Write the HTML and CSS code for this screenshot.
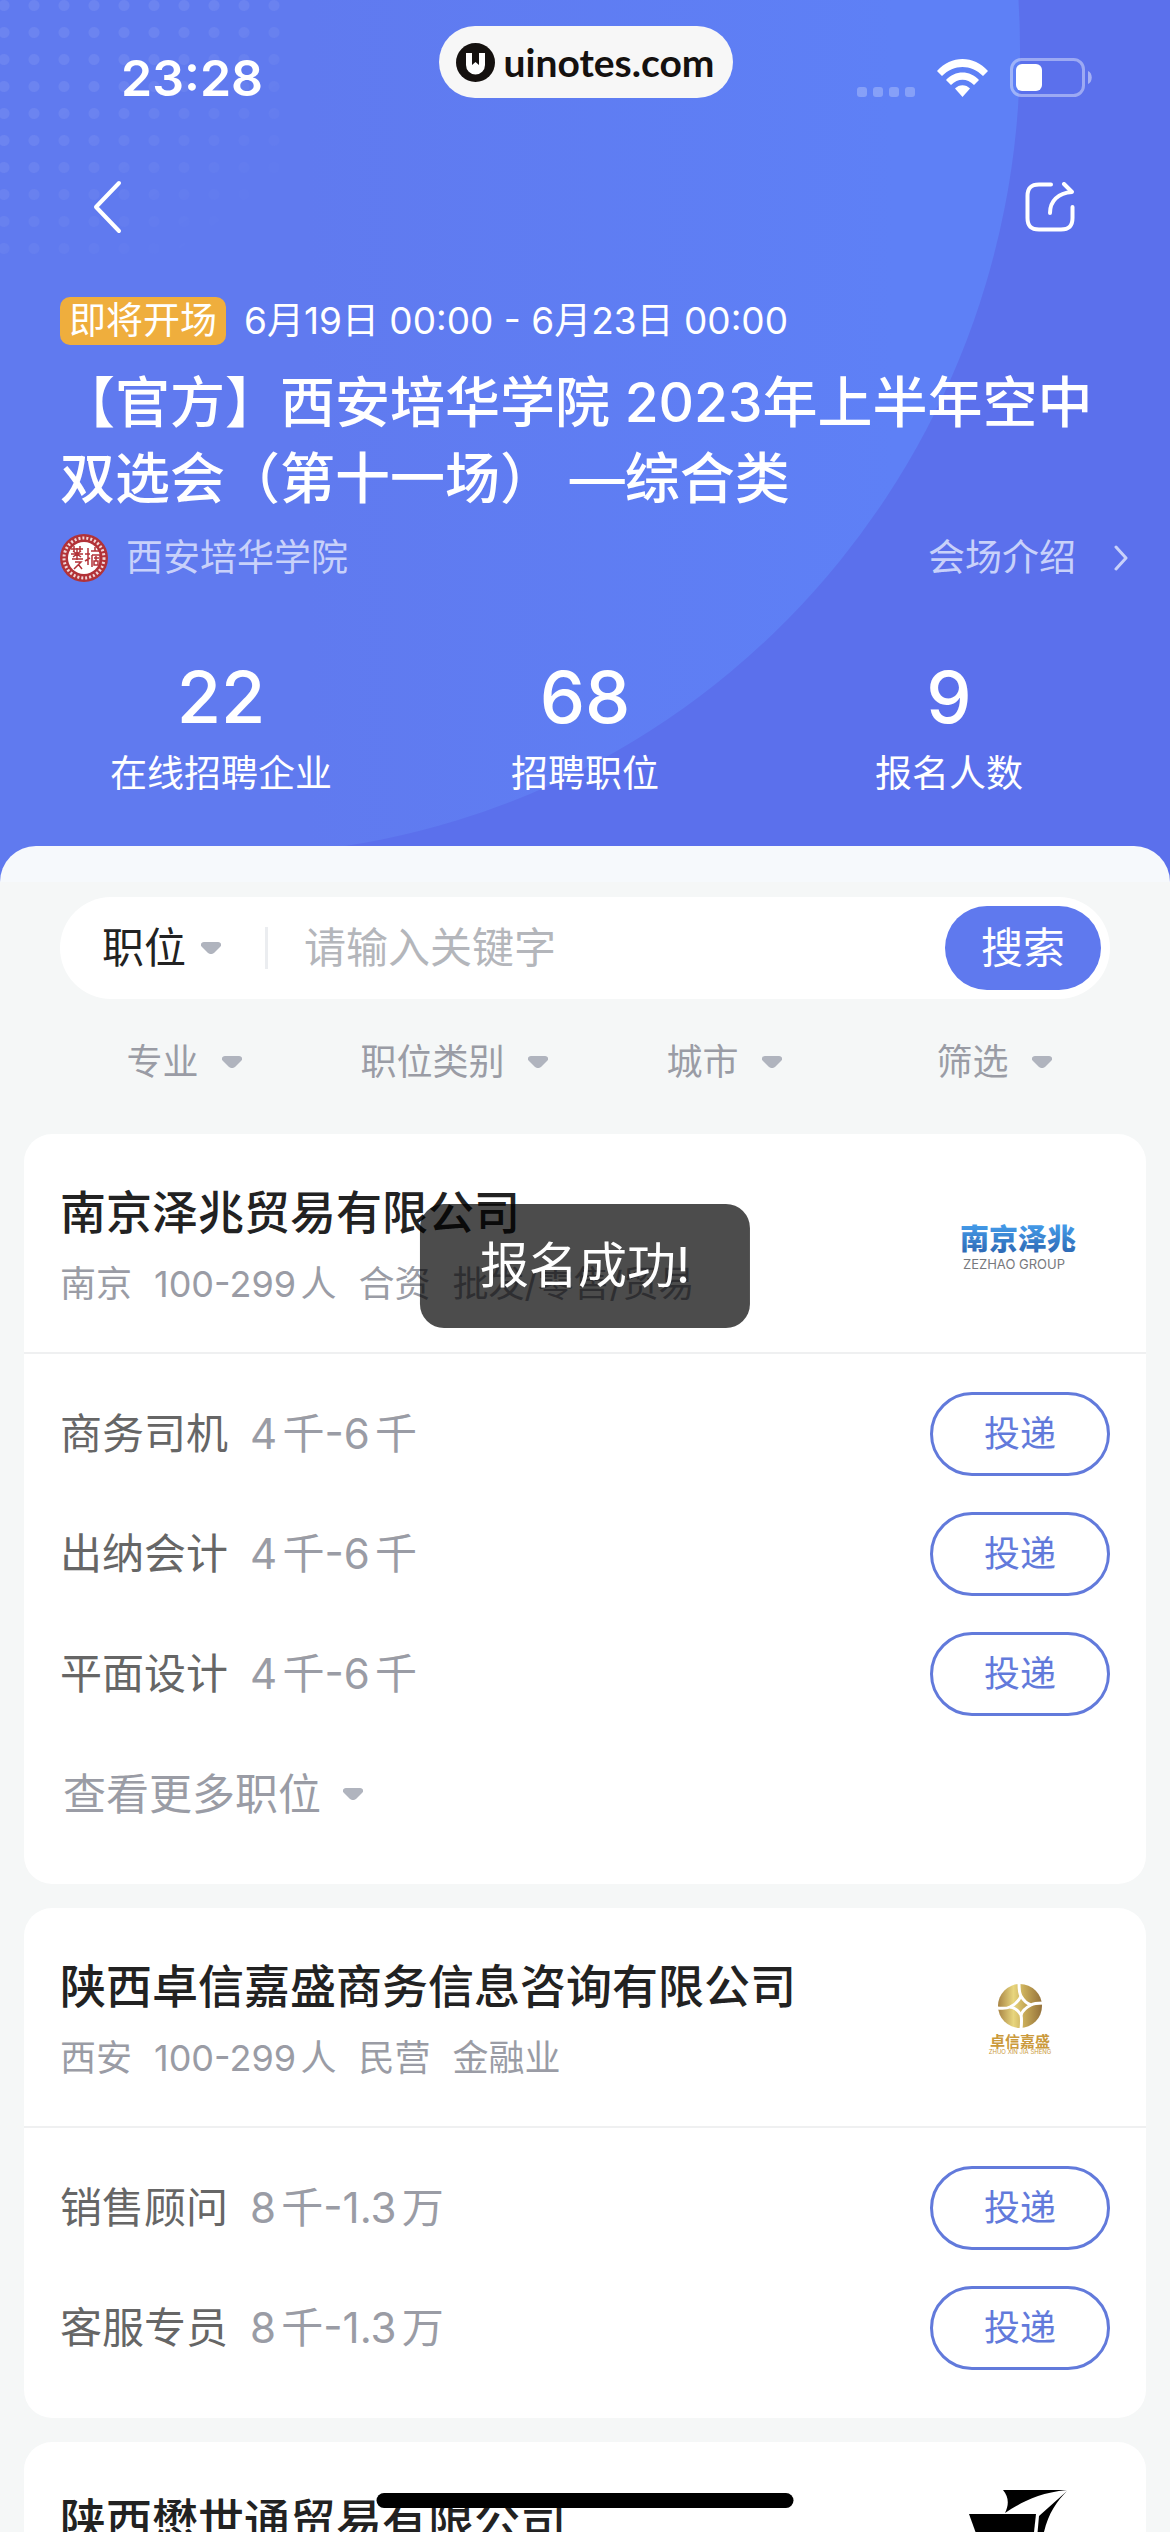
FILE: index.html
```html
<!DOCTYPE html>
<html lang="zh-CN">
<head>
    <meta charset="UTF-8">
    <meta name="viewport" content="width=device-width, initial-scale=1.0">
    <title>空中双选会</title>
    <link rel="stylesheet" href="styles.css">
</head>
<body>
    <!-- Shared icons -->
    <svg class="sprite" aria-hidden="true">
        <symbol id="caret" viewBox="0 0 20 12">
            <path d="M3 0h14c3 0 4 3 2 5l-6 6c-2 1.500-4 1.500-6 0L1 5C-1 3 0 0 3 0z" fill="currentColor"/>
        </symbol>
    </svg>

    <div class="screen">
        <header class="hero">
            <div class="status-bar">
                <div class="time">23:28</div>
                <div class="site-pill">
                    <svg width="39" height="39" viewBox="0 0 39 39" aria-hidden="true">
                        <circle cx="19.500" cy="19.500" r="19.500" fill="#15110f"/>
                        <path d="M10 10h6v12l3.500-3 3.500 3V10h6v12a9.500 9.500 0 0 1-19 0z" fill="#fff"/>
                    </svg>
                    <span>uinotes.com</span>
                </div>
                <div class="status-icons">
                    <svg width="58" height="10" viewBox="0 0 58 10" fill="#fff" fill-opacity=".25" aria-hidden="true">
                        <rect width="10" height="10" rx="3"/>
                        <rect x="16" width="10" height="10" rx="3"/>
                        <rect x="32" width="10" height="10" rx="3"/>
                        <rect x="48" width="10" height="10" rx="3"/>
                    </svg>
                    <svg class="wifi" width="51" height="38" viewBox="0 0 51 38" fill="#fff" aria-hidden="true">
                        <path d="M0 12C14-4 37-4 51 12l-5 5C34 5 17 5 5 17z"/>
                        <path d="M9 21c9-10 24-10 33 0l-5 5c-7-7-16-7-23 0z"/>
                        <path d="M18 29.500c4-4.500 11-4.500 15 0L25.500 38z"/>
                    </svg>
                    <svg width="82" height="39" viewBox="0 0 82 39" aria-hidden="true">
                        <rect x="1.500" y="1.500" width="72" height="36" rx="10" fill="none" stroke="#fff" stroke-opacity=".4" stroke-width="3"/>
                        <rect x="6" y="6" width="26" height="27" rx="6" fill="#fff"/>
                        <path d="M78 13c5 2 5 11 0 13z" fill="#fff" fill-opacity=".45"/>
                    </svg>
                </div>
            </div>

            <nav class="nav-bar">
                <button type="button" class="icon-btn" aria-label="返回">
                    <svg width="32" height="56" viewBox="0 0 32 56" fill="none" stroke="#fff" stroke-width="4" stroke-linecap="round" stroke-linejoin="round">
                        <path d="M28 4 5 28l23 24"/>
                    </svg>
                </button>
                <button type="button" class="icon-btn" aria-label="分享">
                    <svg width="50" height="50" viewBox="0 0 50 50" fill="none" stroke="#fff" stroke-width="4" stroke-linecap="round" stroke-linejoin="round">
                        <path d="M26 2.500H14C6 2.500 2.500 6 2.500 14v22C2.500 44 6 47.500 14 47.500h22c8 0 11.500-3.500 11.500-11.500V25"/>
                        <path d="M25 31c0-12 8-20 22-21l-8-8"/>
                    </svg>
                </button>
            </nav>

            <div class="event">
                <div class="event-time">
                    <span class="badge">即将开场</span>
                    <span>6月19日 00:00 - 6月23日 00:00</span>
                </div>
                <h1>【官方】西安培华学院 2023年上半年空中双选会（第十一场） —综合类</h1>
                <div class="organizer">
                    <svg width="48" height="48" viewBox="0 0 48 48" aria-hidden="true">
                        <circle cx="24" cy="24" r="24" fill="#b23238"/>
                        <circle cx="24" cy="24" r="20" fill="none" stroke="#fff" stroke-width="3" stroke-dasharray="2 2" opacity=".8"/>
                        <circle cx="24" cy="24" r="16" fill="#fff"/>
                        <g fill="none" stroke="#b23238" stroke-width="1.500">
                            <path d="M11 15h12M14 12v6M20 12v6M11 20h12M12 25h11M17 14v12M13 17l8 6M21 17l-8 6M15 28h6l-7 7M18 30l4 5"/>
                            <path d="M25 20h5M28 14v17M25 27l5-3M31 17h9M35 13v4M32 21h8v12M32 21v12M34 24h5M36 22v5M34 27h4v4h-4z"/>
                        </g>
                    </svg>
                    <span>西安培华学院</span>
                    <a class="intro-link" href="#">
                        会场介绍
                        <svg width="14" height="26" viewBox="0 0 14 26" fill="none" stroke="currentColor" stroke-width="3" stroke-linecap="round" stroke-linejoin="round" aria-hidden="true">
                            <path d="M2 2l10 11L2 24"/>
                        </svg>
                    </a>
                </div>
            </div>

            <div class="stats">
                <div class="stat"><strong>22</strong><span>在线招聘企业</span></div>
                <div class="stat"><strong>68</strong><span>招聘职位</span></div>
                <div class="stat"><strong>9</strong><span>报名人数</span></div>
            </div>
        </header>

        <main class="sheet">
            <form class="search">
                <label class="picker search-type">
                    <select aria-label="搜索类型"><option>职位</option></select>
                    <svg class="caret"><use href="#caret"/></svg>
                </label>
                <input type="text" class="search-input" placeholder="请输入关键字" aria-label="关键字">
                <button type="button" class="search-btn">搜索</button>
            </form>

            <div class="filters">
                <label class="picker">
                    <select aria-label="专业"><option>专业</option></select>
                    <svg class="caret"><use href="#caret"/></svg>
                </label>
                <label class="picker">
                    <select aria-label="职位类别"><option>职位类别</option></select>
                    <svg class="caret"><use href="#caret"/></svg>
                </label>
                <label class="picker">
                    <select aria-label="城市"><option>城市</option></select>
                    <svg class="caret"><use href="#caret"/></svg>
                </label>
                <label class="picker">
                    <select aria-label="筛选"><option>筛选</option></select>
                    <svg class="caret"><use href="#caret"/></svg>
                </label>
            </div>

            <section class="card">
                <div class="card-head">
                    <div class="company">
                        <h2>南京泽兆贸易有限公司</h2>
                        <p class="meta"><span>南京</span><span>100-299人</span><span>合资</span><span>批发/零售/贸易</span></p>
                    </div>
                    <svg class="logo" viewBox="0 0 180 126" role="img" aria-label="南京泽兆">
                        <defs>
                            <linearGradient id="blue" x1="0" y1="0" x2="0" y2="1">
                                <stop offset="0" stop-color="#46a0ee"/>
                                <stop offset="1" stop-color="#2b62ad"/>
                            </linearGradient>
                        </defs>
                        <text class="logo-zezhao" x="88" y="68" fill="url(#blue)">南京泽兆</text>
                        <text class="logo-zezhao-en" x="84" y="87">ZEZHAO GROUP</text>
                    </svg>
                </div>
                <ul class="jobs">
                    <li><span class="job">商务司机</span><span class="pay">4千-6千</span><button type="button" class="apply">投递</button></li>
                    <li><span class="job">出纳会计</span><span class="pay">4千-6千</span><button type="button" class="apply">投递</button></li>
                    <li><span class="job">平面设计</span><span class="pay">4千-6千</span><button type="button" class="apply">投递</button></li>
                    <li>
                        <button type="button" class="more">查看更多职位<svg class="caret"><use href="#caret"/></svg></button>
                    </li>
                </ul>
            </section>

            <section class="card">
                <div class="card-head">
                    <div class="company">
                        <h2>陕西卓信嘉盛商务信息咨询有限公司</h2>
                        <p class="meta"><span>西安</span><span>100-299人</span><span>民营</span><span>金融业</span></p>
                    </div>
                    <svg class="logo" viewBox="0 0 180 126" role="img" aria-label="卓信嘉盛">
                        <defs>
                            <linearGradient id="gold">
                                <stop offset="0" stop-color="#a88444"/>
                                <stop offset=".35" stop-color="#e8d67e"/>
                                <stop offset=".6" stop-color="#c8ab58"/>
                                <stop offset="1" stop-color="#94713a"/>
                            </linearGradient>
                        </defs>
                        <circle cx="90" cy="50" r="22" fill="url(#gold)"/>
                        <!-- coin with a curved square in the middle -->
                        <g fill="none" stroke="#fff" stroke-width="3">
                            <path d="M89 27Q89 37 91 40Q95 47 101 49"/>
                            <path d="M113 47Q104 47 101 49Q93 53 91 59"/>
                            <path d="M91 73Q92 64 91 59Q87 52 80 51"/>
                            <path d="M67 52Q76 53 80 51Q88 47 91 40"/>
                        </g>
                        <text class="logo-zhuoxin" x="90" y="91">卓信嘉盛</text>
                        <text class="logo-zhuoxin-en" x="90" y="98">ZHUO XIN JIA SHENG</text>
                    </svg>
                </div>
                <ul class="jobs">
                    <li><span class="job">销售顾问</span><span class="pay">8千-1.3万</span><button type="button" class="apply">投递</button></li>
                    <li><span class="job">客服专员</span><span class="pay">8千-1.3万</span><button type="button" class="apply">投递</button></li>
                </ul>
            </section>

            <section class="card">
                <div class="card-head">
                    <div class="company">
                        <h2>陕西懋世通贸易有限公司</h2>
                    </div>
                    <svg class="logo" viewBox="0 0 180 126" role="img" aria-label="懋世通">
                        <path d="M73 0h64C108 3 92 12 75 23c4-8 4-16-2-23z"/>
                        <path d="M137 1C124 14 114 30 111 60h-5l3-34z"/>
                        <path d="M39 24h67l-4 36H52z"/>
                    </svg>
                </div>
            </section>
        </main>

        <div class="toast" role="status">报名成功!</div>
        <div class="home-indicator"></div>
    </div>
</body>
</html>
```

FILE: styles.css
```css
* {
    margin: 0;
    padding: 0;
    box-sizing: border-box;
}

body {
    font-family: Inter, 'Noto Sans CJK SC', sans-serif;
    background: #f5f7f7;
    color: #222222;
}

button, select, input {
    font-family: inherit;
    color: inherit;
    border: none;
    background: none;
    appearance: none;
    outline: none;
}

.sprite {
    position: absolute;
    width: 0;
    height: 0;
}

.screen {
    position: relative;
    height: 100vh;
    overflow: hidden;
}

/* Header: the left part continues under the light curve */
.hero {
    position: relative;
    z-index: 0;
    overflow: hidden;
    background: linear-gradient(90deg, #607aef 228px, #5b70ec 228px);
    color: #ffffff;
    padding-bottom: 82px;
}

/* big light curve, square on the left so it fills the corner */
.hero::before {
    content: '';
    position: absolute;
    z-index: -1;
    left: -566px;
    top: -755px;
    width: 1586px;
    height: 1610px;
    border-radius: 0 50% 50% 0;
    background: linear-gradient(90deg, #607aef 55%, #5e80f6 92%);
}

/* dot pattern in the corner */
.hero::after {
    content: '';
    position: absolute;
    z-index: -1;
    left: -11px;
    top: -8px;
    width: 300px;
    height: 270px;
    background: radial-gradient(circle, rgba(255, 255, 255, 0.08) 5px, transparent 6px) 0 0 / 30px 27px;
    mask-image: linear-gradient(145deg, #000000 35%, transparent 85%);
}

.status-bar {
    display: grid;
    grid-template-columns: 1fr auto 1fr;
    align-items: start;
    height: 141px;
    padding: 26px 78px 0 121px;
}

.time {
    font-size: 50px;
    line-height: 60px;
    font-weight: 600;
    padding-top: 22px;
}

.site-pill {
    display: flex;
    align-items: center;
    gap: 8px;
    height: 72px;
    padding: 0 18px 0 17px;
    margin-right: 41px;
    border-radius: 36px;
    background: #f7f7f7;
    color: #15110f;
    font-family: Lato, sans-serif;
    font-size: 39px;
    line-height: 48px;
    font-weight: 700;
}

.status-icons {
    display: flex;
    justify-content: flex-end;
    align-items: flex-end;
    gap: 22px;
    padding-top: 32px;
}

.nav-bar {
    display: flex;
    justify-content: space-between;
    align-items: center;
    height: 132px;
    padding: 0 95px 0 91px;
}

.icon-btn {
    display: flex;
}

.event {
    padding: 24px 60px 0;
}

.event-time {
    display: flex;
    align-items: center;
    gap: 18px;
    font-size: 37px;
    line-height: 48px;
}

.badge {
    padding: 0 9px;
    border-radius: 10px;
    background: #efae3d;
}

h1 {
    margin-top: 19px;
    font-size: 55px;
    line-height: 76px;
    font-weight: 500;
}

.organizer {
    display: flex;
    align-items: center;
    gap: 18px;
    margin: 18px -18px 0 0;
    font-size: 37px;
    line-height: 48px;
    color: #c8d1fa;
}

.intro-link {
    display: flex;
    align-items: center;
    gap: 38px;
    margin-left: auto;
    color: inherit;
    text-decoration: none;
}

.stats {
    display: flex;
    padding: 73px 39px 0;
}

.stat {
    flex: 1;
    display: flex;
    flex-direction: column;
    gap: 9px;
    align-items: center;
    font-size: 37px;
    line-height: 52px;
}

.stat strong {
    font-size: 72px;
    line-height: 84px;
    font-weight: 500;
}

/* Content */
.sheet {
    position: relative;
    z-index: 1;
    margin-top: -36px;
    padding: 51px 24px 0;
    border-radius: 36px 36px 0 0;
    background: linear-gradient(#f6f9fc 36px, #f5f7f7 36px);
}

.search {
    display: flex;
    align-items: center;
    height: 102px;
    margin: 0 36px;
    padding: 0 9px 0 42px;
    border-radius: 51px;
    background: #ffffff;
    font-size: 42px;
}

.picker {
    display: flex;
    align-items: center;
}

.picker select {
    font-size: inherit;
    line-height: 60px;
}

.caret {
    width: 20px;
    height: 12px;
    color: #b0b4be;
}

.search-type {
    gap: 14px;
    height: 42px;
    padding-right: 44px;
    border-right: 3px solid #ebedf0;
}

.search-input {
    flex: 1;
    min-width: 0;
    padding-left: 36px;
    font-size: 42px;
    line-height: 60px;
}

.search-input::placeholder {
    color: #b4b6bb;
}

.search-btn {
    width: 156px;
    height: 84px;
    border-radius: 42px;
    background: #5f79ee;
    color: #ffffff;
    font-size: 42px;
    line-height: 60px;
}

.filters {
    display: flex;
    height: 126px;
    margin-bottom: 9px;
    padding: 0 17px 0 25px;
    font-size: 36px;
    color: #9a9ca5;
}

.filters .picker {
    flex: 1;
    justify-content: center;
    gap: 22px;
}

.card {
    margin-bottom: 24px;
    border-radius: 28px;
    background: #ffffff;
}

.card-head {
    display: flex;
    justify-content: space-between;
    padding: 46px 36px 42px;
    border-bottom: 2px solid #eff0f1;
}

.company {
    display: flex;
    flex-direction: column;
    gap: 14px;
}

h2 {
    font-size: 46px;
    line-height: 64px;
    font-weight: 500;
}

.meta {
    display: flex;
    gap: 22px;
    font-size: 36px;
    line-height: 52px;
    color: #9a9ca5;
    text-autospace: normal;
}

.logo {
    width: 180px;
    height: 126px;
    margin-top: 2px;
    margin-bottom: -2px;
}

.logo text {
    text-anchor: middle;
}

.logo-zezhao {
    font-size: 29px;
    font-weight: 900;
}

.logo-zezhao-en {
    font-size: 13px;
    fill: #77797d;
}

.logo-zhuoxin {
    font-size: 15px;
    font-weight: 700;
    fill: #cb9a3c;
}

.logo-zhuoxin-en {
    font-size: 6px;
    fill: #cb9a3c;
}

.jobs {
    list-style: none;
    padding: 20px 36px 30px;
}

.jobs li {
    display: flex;
    align-items: center;
    gap: 22px;
    height: 120px;
    font-size: 42px;
    line-height: 60px;
}

.job {
    color: #666666;
}

.pay {
    color: #9a9ca5;
    text-autospace: normal;
}

.apply {
    width: 180px;
    height: 84px;
    margin-left: auto;
    border: 3px solid #627adb;
    border-radius: 42px;
    color: #627adb;
    font-size: 36px;
    line-height: 52px;
}

.more {
    display: flex;
    align-items: center;
    gap: 22px;
    padding-left: 3px;
    color: #9a9ca5;
    font-size: 43px;
    line-height: 60px;
}

/* Overlays */
.toast {
    position: absolute;
    z-index: 2;
    top: 50%;
    left: 50%;
    transform: translate(-50%, -50%);
    padding: 28px 60px;
    border-radius: 24px;
    background: rgba(0, 0, 0, 0.7);
    color: #ffffff;
    font-size: 49px;
    line-height: 68px;
    white-space: nowrap;
}

.home-indicator {
    position: absolute;
    z-index: 3;
    bottom: 24px;
    left: 50%;
    transform: translateX(-50%);
    width: 417px;
    height: 15px;
    border-radius: 8px;
    background: #000000;
}
```
